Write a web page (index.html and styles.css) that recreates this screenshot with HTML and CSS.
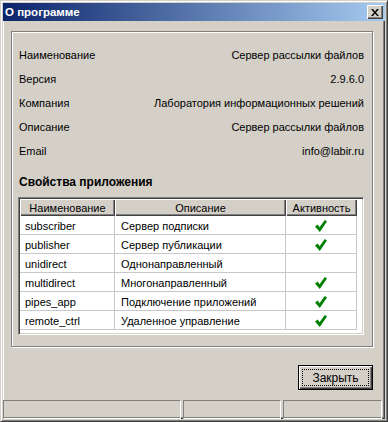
FILE: index.html
```
<!DOCTYPE html>
<html>
<head>
<meta charset="utf-8">
<title>О программе</title>
<link rel="stylesheet" href="styles.css">
</head>
<body>
<div class="window">
	<div class="titlebar">
		<span class="title">О программе</span>
		<span class="close"><svg width="8" height="7" viewBox="0 0 8 7"><path d="M0 0h2l2 2.5 2-2.5h2l-3 3.5 3 3.5h-2l-2-2.5-2 2.5h-2l3-3.5z" fill="#000"/></svg></span>
	</div>
	<div class="content">
		<div class="group">
			<div class="info">
				<div class="row"><span>Наименование</span><span>Сервер рассылки файлов</span></div>
				<div class="row"><span>Версия</span><span>2.9.6.0</span></div>
				<div class="row"><span>Компания</span><span>Лаборатория информационных решений</span></div>
				<div class="row"><span>Описание</span><span>Сервер рассылки файлов</span></div>
				<div class="row"><span>Email</span><span>info@labir.ru</span></div>
			</div>
			<div class="heading">Свойства приложения</div>
			<div class="grid">
				<table>
					<colgroup><col class="c1"><col class="c2"><col class="c3"><col></colgroup>
					<thead>
						<tr><th>Наименование</th><th>Описание</th><th>Активность</th><th class="empty"></th></tr>
					</thead>
					<tbody>
						<tr><td>subscriber</td><td>Сервер подписки</td><td class="chk"><svg class="tick" width="12" height="12" viewBox="0 0 12 12"><path d="M0 6.6 L2.8 4.6 L4.5 7.2 L9.8 0 L12 1.6 L4.8 12 Z" fill="#008000"/></svg></td><td class="empty"></td></tr>
						<tr><td>publisher</td><td>Сервер публикации</td><td class="chk"><svg class="tick" width="12" height="12" viewBox="0 0 12 12"><path d="M0 6.6 L2.8 4.6 L4.5 7.2 L9.8 0 L12 1.6 L4.8 12 Z" fill="#008000"/></svg></td><td class="empty"></td></tr>
						<tr><td>unidirect</td><td>Однонаправленный</td><td class="chk"></td><td class="empty"></td></tr>
						<tr><td>multidirect</td><td>Многонаправленный</td><td class="chk"><svg class="tick" width="12" height="12" viewBox="0 0 12 12"><path d="M0 6.6 L2.8 4.6 L4.5 7.2 L9.8 0 L12 1.6 L4.8 12 Z" fill="#008000"/></svg></td><td class="empty"></td></tr>
						<tr><td>pipes_app</td><td>Подключение приложений</td><td class="chk"><svg class="tick" width="12" height="12" viewBox="0 0 12 12"><path d="M0 6.6 L2.8 4.6 L4.5 7.2 L9.8 0 L12 1.6 L4.8 12 Z" fill="#008000"/></svg></td><td class="empty"></td></tr>
						<tr><td>remote_ctrl</td><td>Удаленное управление</td><td class="chk"><svg class="tick" width="12" height="12" viewBox="0 0 12 12"><path d="M0 6.6 L2.8 4.6 L4.5 7.2 L9.8 0 L12 1.6 L4.8 12 Z" fill="#008000"/></svg></td><td class="empty"></td></tr>
					</tbody>
				</table>
			</div>
		</div>
		<div class="buttons">
			<div class="btn"><span class="focus">Закрыть</span></div>
		</div>
	</div>
	<div class="statusbar">
		<div class="panel p1"></div>
		<div class="panel p2"></div>
		<div class="panel p3"></div>
	</div>
</div>
</body>
</html>
```

FILE: styles.css
```
*{
	margin: 0;
	padding: 0;
	box-sizing: border-box;
}
body{
	background: #d4d0c8;
	font: 11px "Liberation Sans", Arial, sans-serif;
	color: #000;
}
.window{
	width: 388px;
	height: 422px;
	background: #d4d0c8;
	border: 3px solid #d4d0c8;
	box-shadow: inset 1px 1px #fff, inset -1px -1px #404040, inset -2px -2px #808080;
	display: flex;
	flex-direction: column;
	position: relative;
}
.window::before{
	content: "";
	position: absolute;
	left: -3px; top: -3px; right: -3px; bottom: -3px;
	border-style: solid;
	border-width: 1px;
	border-color: #d4d0c8 #404040 #404040 #d4d0c8;
	box-shadow: inset 1px 1px #fff, inset -1px -1px #808080;
	pointer-events: none;
}
.titlebar{
	height: 18px;
	background: linear-gradient(to right, #0a246a, #a6caf0);
	display: flex;
	align-items: center;
	justify-content: space-between;
	padding: 0 2px 0 2px;
}
.title{
	color: #fff;
	font-weight: bold;
	font-size: 11.5px;
}
.close{
	width: 16px;
	height: 14px;
	background: #d4d0c8;
	display: flex;
	align-items: center;
	justify-content: center;
	box-shadow: inset 1px 1px #fff, inset -1px -1px #404040, inset -2px -2px #808080;
}
.close svg{
	display: block;
	margin-left: -1px;
}
.content{
	flex: 1;
	padding: 10px 12px 0 8px;
	display: flex;
	flex-direction: column;
}
.group{
	border: 1px solid #808080;
	box-shadow: 1px 1px #fff, inset 1px 1px #fff;
	padding: 11px 8px 9px 6px;
	width: 362px;
	height: 316px;
}
.row{
	height: 24px;
	display: flex;
	align-items: center;
	justify-content: space-between;
	padding-left: 1px;
}
.heading{
	font-weight: bold;
	font-size: 12px;
	line-height: 24px;
	margin-top: 7px;
	padding-left: 1px;
}
.grid{
	margin-top: 3px;
	height: 138px;
	background: #fff;
	border: 1px solid;
	border-color: #808080 #fff #fff #808080;
	box-shadow: inset 1px 1px #404040, inset -1px -1px #d4d0c8;
	padding: 1px;
	width: 346px;
}
table{
	border-collapse: separate;
	border-spacing: 0;
	table-layout: fixed;
	width: 342px;
}
col.c1{ width: 95px; }
col.c2{ width: 171px; }
col.c3{ width: 71px; }
th{
	height: 17px;
	font-weight: normal;
	background: #d4d0c8;
	text-align: center;
	box-shadow: inset 1px 1px #fff, inset -1px -1px #404040, inset -2px -2px #808080;
	padding-top: 1px;
}
th.empty{
	background: #fff;
	box-shadow: none;
}
td{
	height: 19px;
	border-right: 1px solid #c8c8c8;
	border-bottom: 1px solid #c8c8c8;
	padding: 2px 0 0 5px;
	white-space: nowrap;
}
td:nth-child(2){
	padding-left: 6px;
}
td.chk{
	text-align: center;
	padding: 0;
}
td.empty{
	border: none;
}
.tick{
	display: block;
	margin: 2px auto 0;
}
.buttons{
	display: flex;
	justify-content: flex-end;
	margin-top: 18px;
}
.btn{
	width: 75px;
	height: 25px;
	border: 1px solid #000;
	background: #d4d0c8;
	box-shadow: inset 1px 1px #fff, inset -1px -1px #404040, inset -2px -2px #808080;
	padding: 3px;
	display: flex;
}
.focus{
	flex: 1;
	border: 1px dotted #000;
	display: flex;
	align-items: center;
	justify-content: center;
	font-size: 12px;
}
.statusbar{
	height: 19px;
	display: flex;
	gap: 2px;
	padding-right: 3px;
}
.panel{
	border: 1px solid;
	border-color: #808080 #fff #fff #808080;
}
.p1{ width: 178px; }
.p2{ width: 98px; }
.p3{ flex: 1; }
```
